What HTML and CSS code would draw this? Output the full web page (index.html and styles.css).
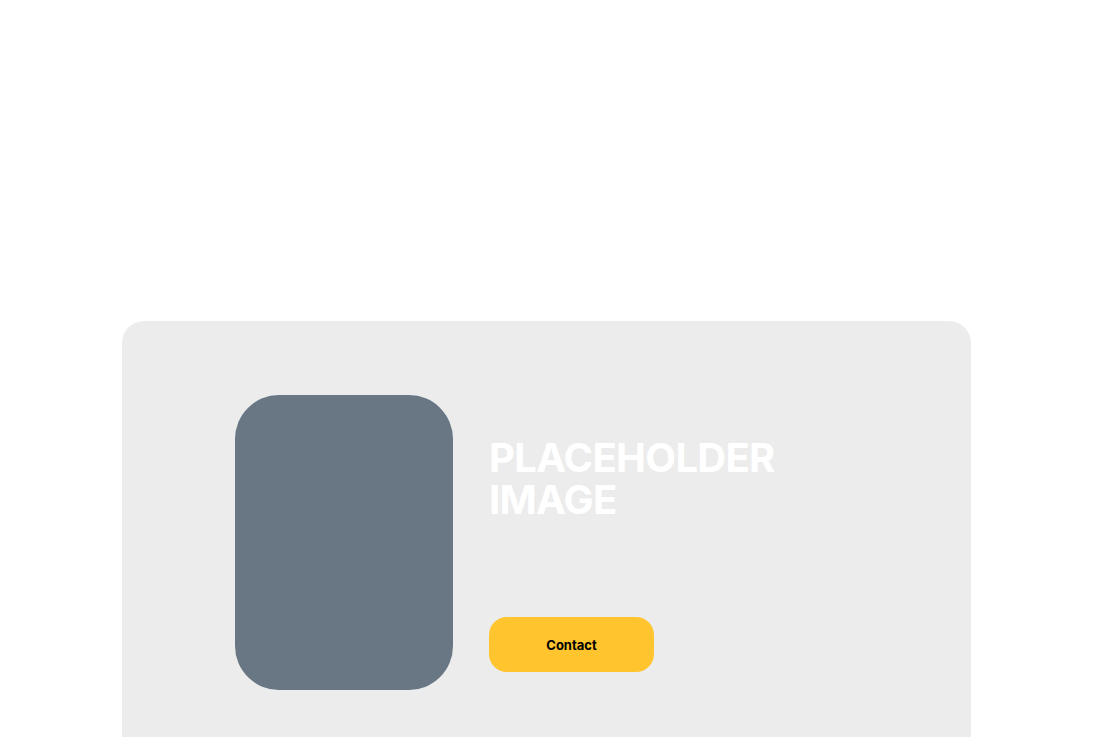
FILE: index.html
```html
<!DOCTYPE html>
<html lang="en">

<head>
    <meta charset="UTF-8">
    <meta name="viewport" content="width=device-width, initial-scale=1.0">
    <title>Placeholder</title>
    <link rel="stylesheet" href="styles.css">
</head>

<body>
    <main class="main">
        <section class="card container">
            <div class="photo"></div>
            <article class="info">
                <h1 class="title">PLACEHOLDER<br>IMAGE</h1>
                <a class="btn" href="#">Contact</a>
            </article>
        </section>
    </main>
</body>

</html>
```
FILE: styles.css
```css
html {
    box-sizing: border-box;
    font-family: Inter, "Noto Sans", sans-serif;
    font-size: 16px;
}

*,
*:before,
*:after {
    box-sizing: inherit;
}

body {
    margin: 0;
    background-color: #fff;
}

.main {
    padding-top: 321px;
}

.container {
    margin-left: auto;
    margin-right: auto;
    width: 849px;
}

.card {
    display: flex;
    gap: 36px;
    padding: 74px 113px;
    background-color: #ececec;
    border-radius: 22px;
}

.photo {
    flex-shrink: 0;
    width: 218px;
    height: 295px;
    background-color: #687783;
    border-radius: 44px;
}

.info {
    display: flex;
    flex-direction: column;
    align-items: flex-start;
}

.title {
    margin: 42px 0 0;
    color: #fff;
    font-size: 40px;
    font-weight: 700;
    line-height: 42px;
    letter-spacing: -0.7px;
}

.btn {
    margin-top: 96px;
    display: flex;
    justify-content: center;
    align-items: center;
    width: 165px;
    height: 55px;
    background-color: #ffc42e;
    border-radius: 18px;
    color: #000;
    font-size: 13px;
    font-weight: 700;
    text-decoration: none;
}
```
